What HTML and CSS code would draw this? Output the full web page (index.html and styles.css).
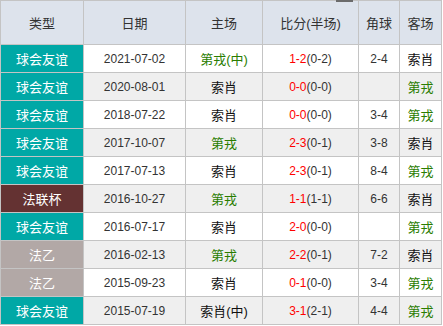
FILE: index.html
```html
<!DOCTYPE html>
<html>
<head>
<meta charset="utf-8">
<link rel="stylesheet" href="styles.css">
</head>
<body>
<div class="wrap">
<div class="topmark"></div>
<table class="tbl">
<colgroup>
<col class="c1"><col class="c2"><col class="c3"><col class="c4"><col class="c5"><col class="c6">
</colgroup>
<thead>
<tr><th>类型</th><th>日期</th><th>主场</th><th>比分(半场)</th><th>角球</th><th>客场</th></tr>
</thead>
<tbody>
<tr><td class="t friendly">球会友谊</td><td>2021-07-02</td><td class="g">第戎(中)</td><td><span class="r">1-2</span>(0-2)</td><td>2-4</td><td class="b">索肖</td></tr>
<tr class="alt"><td class="t friendly">球会友谊</td><td>2020-08-01</td><td class="b">索肖</td><td><span class="r">0-0</span>(0-0)</td><td></td><td class="g">第戎</td></tr>
<tr><td class="t friendly">球会友谊</td><td>2018-07-22</td><td class="b">索肖</td><td><span class="r">0-0</span>(0-0)</td><td>3-4</td><td class="g">第戎</td></tr>
<tr class="alt"><td class="t friendly">球会友谊</td><td>2017-10-07</td><td class="g">第戎</td><td><span class="r">2-3</span>(0-1)</td><td>3-8</td><td class="b">索肖</td></tr>
<tr><td class="t friendly">球会友谊</td><td>2017-07-13</td><td class="b">索肖</td><td><span class="r">2-3</span>(0-1)</td><td>8-4</td><td class="g">第戎</td></tr>
<tr class="alt"><td class="t cup">法联杯</td><td>2016-10-27</td><td class="g">第戎</td><td><span class="r">1-1</span>(1-1)</td><td>6-6</td><td class="b">索肖</td></tr>
<tr><td class="t friendly">球会友谊</td><td>2016-07-17</td><td class="b">索肖</td><td><span class="r">2-0</span>(0-0)</td><td></td><td class="g">第戎</td></tr>
<tr class="alt"><td class="t l2">法乙</td><td>2016-02-13</td><td class="g">第戎</td><td><span class="r">2-2</span>(0-1)</td><td>7-2</td><td class="b">索肖</td></tr>
<tr><td class="t l2">法乙</td><td>2015-09-23</td><td class="b">索肖</td><td><span class="r">0-1</span>(0-0)</td><td>3-4</td><td class="g">第戎</td></tr>
<tr class="alt"><td class="t friendly">球会友谊</td><td>2015-07-19</td><td class="b">索肖(中)</td><td><span class="r">3-1</span>(2-1)</td><td>4-4</td><td class="g">第戎</td></tr>
</tbody>
</table>
</div>
</body>
</html>
```
FILE: styles.css
```css
html, body {
  margin: 0;
  padding: 0;
  background: #fff;
}
.wrap {
  position: relative;
}
.topmark {
  position: absolute;
  left: 336px;
  top: 0;
  width: 17px;
  height: 2px;
  background: #6b6b6b;
}
.tbl {
  border-collapse: collapse;
  table-layout: fixed;
  width: 442px;
  font-family: "Liberation Sans", "Noto Sans CJK SC", sans-serif;
  font-size: 12px;
  color: #333;
}
.c1 { width: 83px; }
.c2 { width: 102px; }
.c3 { width: 77px; }
.c4 { width: 96px; }
.c5 { width: 41px; }
.c6 { width: 42px; }
.tbl th, .tbl td {
  border: 1px solid #c4c4c4;
  text-align: center;
  padding: 0;
  white-space: nowrap;
  overflow: hidden;
}
.tbl th {
  height: 43px;
  background: #dde3ec;
  font-weight: normal;
  font-size: 13px;
  color: #333;
}
.tbl td {
  height: 27px;
  background: #fff;
}
.tbl tr.alt td {
  background: #efefef;
}
.tbl td.t {
  color: #fff;
  font-size: 13px;
}
.tbl tr td.friendly { background: #00a8a6; }
.tbl tr td.cup { background: #643232; }
.tbl tr td.l2 { background: #b2a8a6; }
.g { color: #2a7d00; font-size: 13px; }
.b { color: #111; font-size: 13px; }
.r { color: #f00; }
```
